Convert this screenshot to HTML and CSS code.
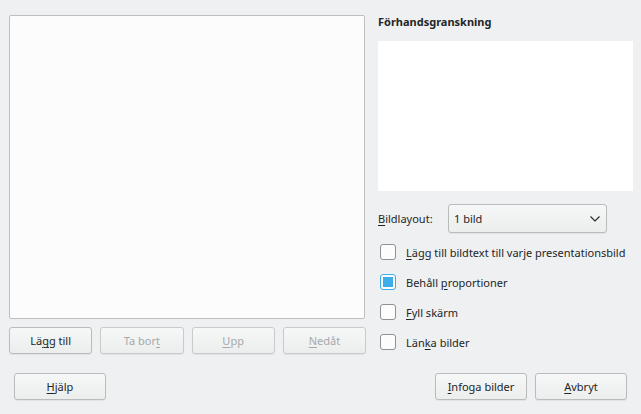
FILE: index.html
```html
<!DOCTYPE html>
<html lang="sv">
<head>
<meta charset="utf-8">
<title>Bilder</title>
<link rel="stylesheet" href="styles.css">
</head>
<body>
<div class="dialog">
  <div class="main">
    <div class="left">
      <div class="list"></div>
      <div class="list-buttons">
        <button class="btn">Lä<u>g</u>g till</button>
        <button class="btn disabled">Ta bor<u>t</u></button>
        <button class="btn disabled"><u>U</u>pp</button>
        <button class="btn disabled"><u>N</u>edåt</button>
      </div>
    </div>
    <div class="right">
      <div class="title">Förhandsgranskning</div>
      <div class="preview"></div>
      <div class="layout-row">
        <span class="label"><u>B</u>ildlayout:</span>
        <div class="combo">
          <span>1 bild</span>
          <svg class="chevron" width="10" height="6" viewBox="0 0 10 6"><path d="M0.5 0.5 L5 5 L9.5 0.5" fill="none" stroke="#232627" stroke-width="1.1"/></svg>
        </div>
      </div>
      <div class="checks">
        <div class="check"><span class="box"></span><span><u>L</u>ägg till bildtext till varje presentationsbild</span></div>
        <div class="check"><span class="box checked"></span><span>Behåll <u>p</u>roportioner</span></div>
        <div class="check"><span class="box"></span><span><u>F</u>yll skärm</span></div>
        <div class="check"><span class="box"></span><span>Län<u>k</u>a bilder</span></div>
      </div>
    </div>
  </div>
  <div class="bottom">
    <button class="btn wide"><u>H</u>jälp</button>
    <div class="spacer"></div>
    <button class="btn wide"><u>I</u>nfoga bilder</button>
    <button class="btn wide"><u>A</u>vbryt</button>
  </div>
</div>
</body>
</html>
```
FILE: styles.css
```css
html, body {
  margin: 0;
  padding: 0;
  background: #eff0f1;
}
body {
  width: 641px;
  height: 414px;
  overflow: hidden;
  font-family: "Noto Sans", "DejaVu Sans", sans-serif;
  font-size: 11px;
  color: #232627;
}
u {
  text-decoration: underline;
  text-underline-offset: 2px;
  text-decoration-thickness: 1px;
}
.dialog {
  display: flex;
  flex-direction: column;
}
.main {
  display: flex;
  padding: 15px 8px 0 9px;
  gap: 13px;
  height: 339px;
}
.left {
  width: 356px;
  display: flex;
  flex-direction: column;
  gap: 8px;
}
.list {
  height: 302px;
  border: 1px solid #bcbebf;
  border-radius: 2px;
  background: #fcfcfc;
  flex: none;
}
.list-buttons {
  display: flex;
  gap: 8px;
  width: 357px;
  flex: none;
}
.btn {
  font: inherit;
  color: #232627;
  height: 27px;
  padding: 0;
  border: 1px solid #b9bbbc;
  border-radius: 3px;
  background: linear-gradient(#f6f7f7, #eceded);
  box-shadow: 0 1px 1px rgba(0,0,0,0.06);
}
.list-buttons .btn {
  flex: 1;
}
.btn.disabled {
  color: #a7a9aa;
  border-color: #c8cacb;
}
.right {
  display: flex;
  flex-direction: column;
  width: 255px;
  white-space: nowrap;
}
.right > * {
  flex: none;
}
.title {
  font-weight: bold;
  height: 26px;
  line-height: 14px;
}
.preview {
  height: 150px;
  background: #ffffff;
}
.layout-row {
  margin-top: 13px;
  display: flex;
  align-items: center;
  height: 29px;
}
.label {
  width: 70px;
  flex: none;
}
.combo {
  width: 146px;
  height: 27px;
  border: 1px solid #b9bbbc;
  border-radius: 3px;
  background: linear-gradient(#f6f7f7, #eceded);
  display: flex;
  align-items: center;
  justify-content: space-between;
  padding: 0 6px 0 5px;
  box-shadow: 0 1px 1px rgba(0,0,0,0.06);
}
.checks {
  display: flex;
  flex-direction: column;
  margin-top: 4px;
}
.check {
  display: flex;
  align-items: center;
  height: 30px;
  gap: 10px;
  padding-left: 2px;
}
.box {
  width: 14px;
  height: 14px;
  border: 1px solid #8f9193;
  border-radius: 3px;
  background: #fcfcfc;
  position: relative;
  flex: none;
}
.box.checked {
  border-color: #3daee9;
}
.box.checked::after {
  content: "";
  position: absolute;
  left: 2px;
  top: 2px;
  width: 10px;
  height: 10px;
  background: #3daee9;
}
.bottom {
  display: flex;
  padding: 19px 14px 0 14px;
  gap: 8px;
}
.spacer {
  flex: 1;
}
.btn.wide {
  width: 92px;
}
```
